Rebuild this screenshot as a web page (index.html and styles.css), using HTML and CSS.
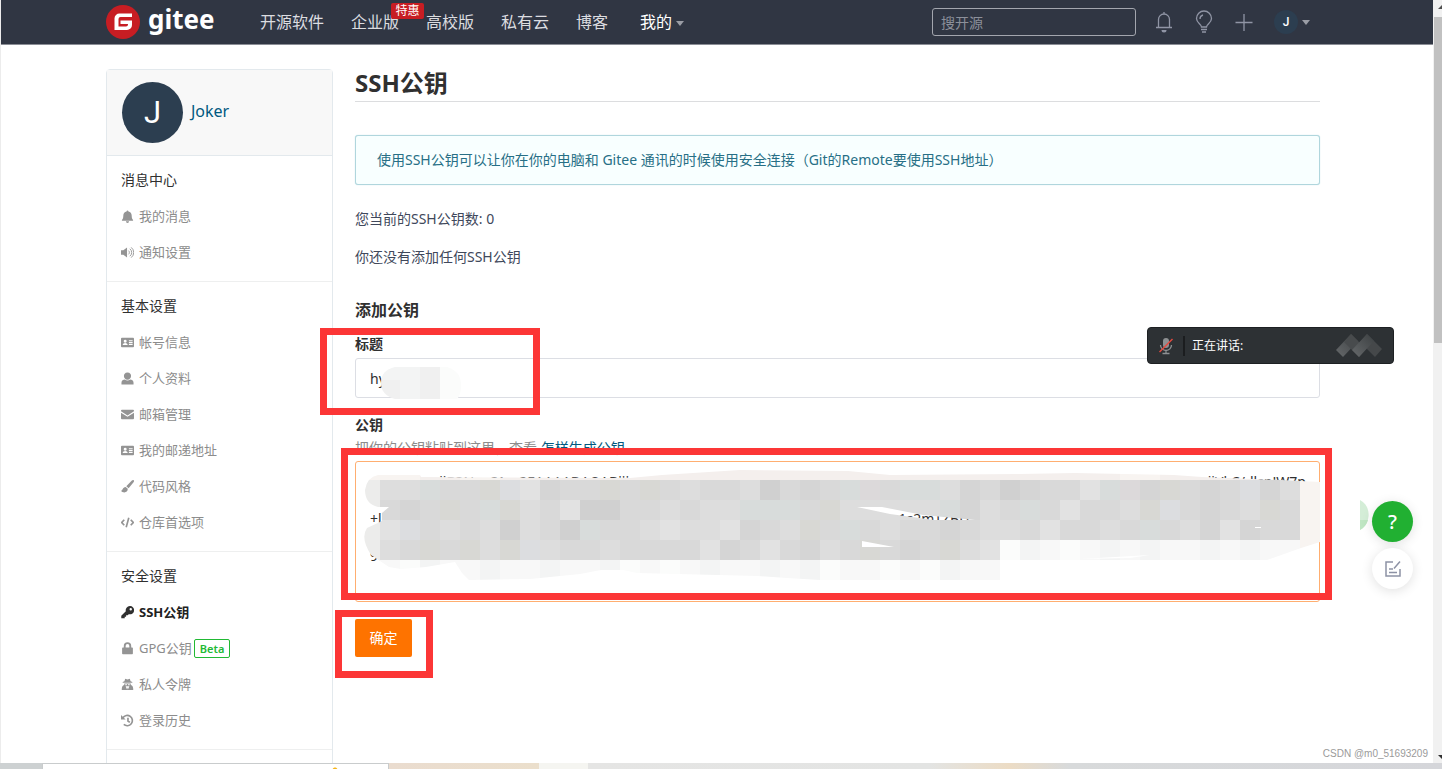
FILE: index.html
```html
<!DOCTYPE html>
<html lang="zh-CN">
<head>
    <meta charset="UTF-8">
    <meta name="viewport" content="width=device-width, initial-scale=1.0">
    <title>SSH公钥 - Gitee</title>
    <link rel="stylesheet" href="styles.css">
</head>
<body>
    <!-- shared icons -->
    <svg class="sprite" aria-hidden="true">
        <symbol id="i-card" viewBox="0 0 14 14"><path fill-rule="evenodd" d="M1 2h12a1 1 0 0 1 1 1v8a1 1 0 0 1-1 1H1a1 1 0 0 1-1-1V3a1 1 0 0 1 1-1zM4.500 4a1.600 1.600 0 1 1 0 3.200a1.600 1.600 0 0 1 0-3.200zM1.800 9.800c0-3 5.400-3 5.400 0zM8.500 4.500h4v1.200h-4zm0 2h4v1.200h-4zm0 2h4v1.200h-4z"/></symbol>
    </svg>

    <div class="window">
        <div class="page">
            <header class="topbar">
                <a href="#" class="logo">
                    <svg width="34" height="34" viewBox="0 0 34 34"><circle cx="17" cy="17" r="17" fill="#c71d23"/><path d="M26 8.500H13.500a5 5 0 0 0-5 5V25h12.500a5 5 0 0 0 5-5v-4.500H14.500v3.500h7.500v.5a2 2 0 0 1-2 2h-7.500v-7.500a2 2 0 0 1 2-2H26z" fill="#fff"/></svg>
                    <span>gitee</span>
                </a>
                <nav class="nav">
                    <a href="#">开源软件</a>
                    <a href="#" class="has-badge">企业版<span class="sale">特惠</span></a>
                    <a href="#">高校版</a>
                    <a href="#">私有云</a>
                    <a href="#">博客</a>
                    <a href="#" class="mine">我的<i class="caret"></i></a>
                </nav>
                <div class="tools">
                    <input type="search" class="search" placeholder="搜开源" aria-label="搜开源">
                    <button class="tool" aria-label="通知"><svg width="20" height="24" viewBox="0 0 20 24"><path d="M4.500 17V9.500a5.500 5.500 0 0 1 11 0V17M2 17.500h16M10 4V2" /><path d="M7.500 20a2.500 2.500 0 0 0 5 0z" class="solid"/></svg></button>
                    <button class="tool" aria-label="帮助"><svg width="20" height="24" viewBox="0 0 20 24"><path d="M7.500 17c0-3-5-4-5-8.500a7.500 7.500 0 0 1 15 0c0 4.500-5 5.500-5 8.500zM6 9a4 4 0 0 1 3-4M7 19.500h6M8 22h4"/></svg></button>
                    <button class="tool" aria-label="新建"><svg width="20" height="24" viewBox="0 0 20 24"><path d="M10 4v17M1.500 12.500h17"/></svg></button>
                    <button class="user"><span>J</span><i class="caret"></i></button>
                </div>
            </header>

            <div class="container">
                <aside class="sidebar">
                    <div class="profile">
                        <div class="avatar">J</div>
                        <a href="#">Joker</a>
                    </div>
                    <section class="menu">
                        <h2>消息中心</h2>
                        <a href="#"><svg viewBox="0 0 14 14"><path d="M7 0.500a1 1 0 0 1 1 1c2.500.5 3.500 2.500 3.500 4.500 0 3 .7 4 1.500 4.800V11.500H1v-.7C1.800 10 2.500 9 2.500 6c0-2 1-4 3.500-4.500a1 1 0 0 1 1-1zM5.300 12.200h3.400a1.700 1.700 0 0 1-3.400 0z"/></svg>我的消息</a>
                        <a href="#"><svg viewBox="0 0 14 14"><path d="M0 4.500h2.500L6.500 1.500v11L2.500 9.500H0z"/><path class="line" d="M8 5a2.500 2.500 0 0 1 0 4M9.500 3a5 5 0 0 1 0 8M11 1.500a7 7 0 0 1 0 11"/></svg>通知设置</a>
                    </section>
                    <section class="menu">
                        <h2>基本设置</h2>
                        <a href="#"><svg><use href="#i-card"/></svg>帐号信息</a>
                        <a href="#"><svg viewBox="0 0 14 14"><path d="M7 .5c5.500 0 4.800 7.800 0 7.800S1.500.5 7 .5zM.5 13.500v-2C.5 9 2.500 8.500 4 8.200c2 1.300 4 1.300 6 0C11.500 8.500 13.500 9 13.500 11.500v2z"/></svg>个人资料</a>
                        <a href="#"><svg viewBox="0 0 14 14"><path d="M1 2h12a1 1 0 0 1 1 1v.5L7 8 0 3.500V3a1 1 0 0 1 1-1zM0 5l7 4.500L14 5v6a1 1 0 0 1-1 1H1a1 1 0 0 1-1-1z"/></svg>邮箱管理</a>
                        <a href="#"><svg><use href="#i-card"/></svg>我的邮递地址</a>
                        <a href="#"><svg viewBox="0 0 14 14"><path d="M13.700.3c.6.6.3 1.300-.2 2L8.200 8.800 5.700 6.700 11.700.6c.7-.6 1.500-.8 2-.3zM5 7.500l2.300 2c0 5-5.800 4.500-7.300 2 2 .3 1.300-3.800 5-4z"/></svg>代码风格</a>
                        <a href="#"><svg viewBox="0 0 14 14"><path class="line thick" d="M3.500 4L.8 7l2.700 3M10.500 4l2.700 3-2.700 3M8.400 1.800L5.600 12.200"/></svg>仓库首选项</a>
                    </section>
                    <section class="menu">
                        <h2>安全设置</h2>
                        <a href="#" class="active"><svg viewBox="0 0 14 14"><path fill-rule="evenodd" d="M9.500 0a4.500 4.500 0 1 1-1.200 8.800L7.200 10H5.500v1.600H4V13.200H.3V10.400L5.200 5.600A4.500 4.500 0 0 1 9.500 0zm1 2.200a1.300 1.300 0 1 0 0 2.600a1.300 1.300 0 0 0 0-2.600z"/></svg>SSH公钥</a>
                        <a href="#"><svg viewBox="0 0 14 14"><path fill-rule="evenodd" d="M2 6h1V4.200a4 4 0 0 1 8 0V6h1a.8.8 0 0 1 .8.8v5.700a.8.8 0 0 1-.8.8H2a.8.8 0 0 1-.8-.8V6.800A.8.8 0 0 1 2 6zm3 0h4V4.200a2 2 0 0 0-4 0z"/></svg>GPG公钥<span class="beta">Beta</span></a>
                        <a href="#"><svg viewBox="0 0 14 14"><path fill-rule="evenodd" d="M4.500.8L7 1.500 9.500.8l.8 2.700 1.900.8v.8H1.800v-.8l1.900-.8zM3.500 6h7v1.500c2 .5 2.700 2 2.700 5.500H.8c0-3.500.7-5 2.700-5.500zm1 .7v1h2v-1zm3 0v1h2v-1zM5 9l1.500 3.500L7 10l.5 2.500L9 9z"/></svg>私人令牌</a>
                        <a href="#"><svg viewBox="0 0 14 14"><path d="M0 1v5h5z"/><path class="line thick" d="M2 4a5.600 5.600 0 1 1 1 7.300M7.500 4v3.500L9.500 9"/></svg>登录历史</a>
                    </section>
                    <section class="menu"></section>
                </aside>

                <main class="content">
                    <h1>SSH公钥</h1>
                    <div class="notice">使用SSH公钥可以让你在你的电脑和 Gitee 通讯的时候使用安全连接（Git的Remote要使用SSH地址）</div>
                    <p>您当前的SSH公钥数: 0</p>
                    <p>你还没有添加任何SSH公钥</p>

                    <form class="key-form">
                        <h3>添加公钥</h3>
                        <div class="field">
                            <label for="key-title">标题</label>
                            <input type="text" id="key-title" value="hy">
                            <svg class="smudge smudge-title" width="82" height="32" id="mosaic-title"></svg>
                            <div class="mark mark-title"></div>
                        </div>
                        <div class="field">
                            <label for="key-body">公钥</label>
                            <div class="hint">把你的公钥粘贴到这里，查看 <a href="#">怎样生成公钥</a></div>
                            <textarea id="key-body" spellcheck="false"></textarea>
                            <svg class="smudge smudge-body" width="960" height="120" id="mosaic-body"></svg>
                            <div class="mark mark-body"></div>
                        </div>
                        <div class="field actions">
                            <button type="button" class="submit">确定</button>
                            <div class="mark mark-submit"></div>
                        </div>
                    </form>
                </main>
            </div>

            <div class="speaking">
                <svg width="16" height="18" viewBox="0 0 16 18"><rect x="5" y="1" width="6" height="10" rx="3" fill="#8d9092"/><path d="M2.500 8a5.500 5.500 0 0 0 11 0M8 13.500V16M4.500 16.500h7" fill="none" stroke="#8d9092" stroke-width="1.300"/><path d="M1.500 15L14.500 2" stroke="#e5493f" stroke-width="1.500"/></svg>
                <span>正在讲话:</span>
                <svg class="wave" width="48" height="26" viewBox="0 0 48 26">
                    <defs><linearGradient id="fade" x1="0" y1="1" x2="1" y2="0"><stop offset="0" stop-color="#66696b"/><stop offset="1" stop-color="#3c4042"/></linearGradient></defs>
                    <path d="M16 1l7 7L8 24 1 17z" fill="url(#fade)"/>
                    <path d="M16 1l15 15-7 8L9 9z" fill="#484b4d"/>
                    <path d="M32 1l15 15-7 8L25 9z" fill="#45484a"/>
                    <path d="M32 1l7 7-15 16-7-7z" fill="url(#fade)"/>
                </svg>
            </div>

            <svg class="blob" width="9" height="30" viewBox="0 0 9 30"><path d="M0 0c12 6 11 24 0 30z" fill="#d4edd7"/><path d="M0 20h8c-1 4-4 8-8 10z" fill="#bfe6c3"/></svg>
            <div class="floaters">
                <button class="ask" aria-label="帮助中心">?</button>
                <button class="feedback" aria-label="反馈"><svg width="18" height="18" viewBox="0 0 18 18"><path d="M9 2H2v14h14V9M16 1.500l-6 7M5 9h4M5 12.500h8"/></svg></button>
            </div>
            <div class="watermark">CSDN @m0_51693209</div>
        </div>

        <div class="scroll"><i class="up"></i><div class="thumb"></div><i class="down"></i></div>
    </div>

    <div class="desktop"><div class="tab"></div><div class="wall"></div></div>

    <script src="mosaic.js"></script>
</body>
</html>
```

FILE: styles.css
```css
* {
    box-sizing: border-box;
}

body {
    margin: 0;
    height: 100vh;
    display: flex;
    flex-direction: column;
    overflow: hidden;
    background: #fff;
    color: #40485b;
    font-family: "Noto Sans", "Noto Sans CJK SC", sans-serif;
    font-size: 14px;
    line-height: 20px;
}

a {
    color: inherit;
    text-decoration: none;
}

button, input, textarea {
    font: inherit;
}

button {
    border: none;
    padding: 0;
    background: none;
}

.sprite {
    position: absolute;
    width: 0;
    height: 0;
}

.window {
    flex: 1;
    min-height: 0;
    display: flex;
}

.page {
    position: relative;
    flex: 1;
    overflow: hidden;
    border-left: 1px solid #ececec;
}

/* top bar */
.topbar {
    display: flex;
    align-items: center;
    height: 45px;
    padding: 0 123px 0 105px;
    background: #303643;
    border-bottom: 1px solid #8b8e96;
    color: #dcdde0;
    font-size: 16px;
}

.logo {
    display: flex;
    align-items: center;
    gap: 8px;
    width: 154px;
    height: 42px;
    color: #fff;
    font-family: "Noto Sans", sans-serif;
    font-size: 26px;
    font-weight: 700;
    line-height: 34px;
}

.logo span {
    padding-bottom: 6px;
}

.nav {
    display: flex;
    gap: 27px;
}

.has-badge {
    position: relative;
}

.sale {
    position: absolute;
    left: 40px;
    top: -9px;
    width: 33px;
    height: 16px;
    border-radius: 2px;
    background: #c71d23;
    color: #fff;
    font-size: 12px;
    line-height: 16px;
    text-align: center;
}

.mine {
    padding-left: 5px;
    color: #fff;
}

.caret {
    display: inline-block;
    margin-left: 4px;
    border: 4px solid transparent;
    border-top: 5px solid #9a9da5;
    border-bottom: 0;
    vertical-align: 2px;
}

.tools {
    display: flex;
    align-items: center;
    gap: 20px;
    margin-left: auto;
}

.search {
    width: 204px;
    height: 28px;
    margin-right: -2px;
    padding: 0 8px;
    border: 1px solid #a3a6ae;
    border-radius: 3px;
    background: transparent;
    color: #fff;
    font-size: 14px;
}

.search::placeholder {
    color: #8c909a;
}

.tool {
    display: flex;
}

.tool svg {
    fill: none;
    stroke: #9095a5;
    stroke-width: 1.3;
}

.tool .solid {
    fill: #9095a5;
    stroke: none;
}

.user {
    display: flex;
    align-items: center;
}

.user span {
    width: 24px;
    height: 24px;
    border-radius: 50%;
    background: #2c3e50;
    color: #fff;
    font-family: Roboto, sans-serif;
    font-size: 12px;
    font-weight: 500;
    line-height: 24px;
    text-align: center;
}

/* columns */
.container {
    display: flex;
    align-items: flex-start;
    gap: 22px;
    padding: 24px 113px 0 105px;
}

.sidebar {
    flex: 0 0 227px;
    border: 1px solid #e3e9ed;
    border-radius: 4px;
}

.profile {
    display: flex;
    align-items: center;
    gap: 8px;
    height: 86px;
    padding: 0 15px;
    background: #f8f8f8;
    border-bottom: 1px solid #e3e9ed;
    color: #005980;
    font-size: 16px;
}

.profile a {
    padding-bottom: 4px;
}

.avatar {
    width: 61px;
    height: 61px;
    border-radius: 50%;
    background: #2c3e50;
    color: #fff;
    font-family: Roboto, sans-serif;
    font-size: 31px;
    line-height: 61px;
    text-align: center;
}

.menu {
    min-height: 20px;
    padding: 5px 14px 11px;
    border-bottom: 1px solid #eeefef;
    color: #8c8c8c;
    font-size: 13px;
}

.menu h2 {
    margin: 0;
    color: #303030;
    font-size: 14px;
    font-weight: 400;
    line-height: 37px;
}

.menu a {
    display: flex;
    align-items: center;
    height: 36px;
}

.menu svg {
    width: 13px;
    height: 13px;
    margin-right: 5px;
    fill: #949494;
}

.menu .line {
    fill: none;
    stroke: #949494;
}

.menu .thick {
    stroke-width: 1.8;
}

.menu .active {
    color: #212121;
    font-weight: 700;
}

.menu .active svg {
    fill: #303030;
}

.beta {
    margin-left: 2px;
    padding: 0 5px;
    border: 1px solid #21b934;
    border-radius: 2px;
    color: #21b934;
    font-size: 11px;
    font-weight: 600;
    line-height: 17px;
}

/* main column */
.content {
    flex: 1;
    min-width: 0;
}

.content h1 {
    margin: 0 0 33px;
    padding-bottom: 5px;
    border-bottom: 1px solid #dcdddf;
    color: #303030;
    font-size: 24px;
    line-height: 27px;
}

.notice {
    margin-bottom: 24px;
    padding: 14px 21px;
    border: 1px solid #b0d6dd;
    border-radius: 3px;
    background: #f8ffff;
    box-shadow: 0 0 1px #a9d5de;
    color: #276f86;
}

.content p {
    margin: 0 0 18px;
}

.key-form h3 {
    margin: 33px 0 14px;
    color: #303030;
    font-size: 16px;
    line-height: 20px;
}

.field {
    position: relative;
    margin-bottom: 17px;
}

.field label {
    display: block;
    color: #303030;
    font-weight: 700;
}

.field input, .field textarea {
    display: block;
    width: 100%;
    border: 1px solid #dcdee4;
    border-radius: 3px;
    outline: none;
    color: #303030;
}

.field input {
    height: 40px;
    margin-top: 4px;
    padding: 0 14px;
}

.field textarea {
    height: 141px;
    padding: 1px 14px;
    border-color: #ffae70;
    line-height: 37px;
    white-space: pre;
    overflow: hidden;
}

.hint {
    margin-top: 3px;
    height: 23px;
    color: #8c8c8c;
}

.hint a {
    color: #005980;
}

.submit {
    display: block;
    width: 57px;
    height: 38px;
    border-radius: 2px;
    background: #fe7300;
    color: #fff;
}

/* blurred out parts and the frames drawn round them */
.smudge {
    position: absolute;
}

.smudge-title {
    left: 26px;
    top: 33px;
}

.smudge-body {
    left: 5px;
    top: 55px;
}

.mark {
    position: absolute;
    border: 7px solid #fc3636;
}

.mark-title {
    left: -35px;
    top: -6px;
    width: 220px;
    height: 87px;
}

.mark-body {
    left: -14px;
    right: -12px;
    top: 33px;
    height: 152px;
}

.mark-submit {
    left: -20px;
    top: -9px;
    width: 98px;
    height: 68px;
}

/* meeting bar */
.speaking {
    position: absolute;
    right: 39px;
    top: 327px;
    display: flex;
    align-items: center;
    width: 247px;
    height: 37px;
    padding: 0 10px;
    border: 1px solid #1d2022;
    border-radius: 4px;
    background: #2d3134;
    color: #fff;
    font-size: 12px;
}

.speaking span {
    margin-left: 9px;
    padding-left: 7px;
    border-left: 2px solid #1b1d1f;
}

.speaking .wave {
    margin-left: auto;
}

.blob {
    position: absolute;
    right: 64px;
    top: 500px;
}

.floaters {
    position: absolute;
    right: 20px;
    top: 501px;
    display: flex;
    flex-direction: column;
    gap: 6px;
}

.floaters button {
    display: flex;
    align-items: center;
    justify-content: center;
    width: 41px;
    height: 41px;
    border-radius: 50%;
    background: #fff;
    box-shadow: 0 2px 12px rgba(0, 0, 0, 0.12);
}

.floaters .ask {
    background: #21b032;
    color: #fff;
    font-size: 20px;
    font-weight: 500;
}

.floaters svg {
    fill: none;
    stroke: #8d92a5;
    stroke-width: 1.5;
}

.watermark {
    position: absolute;
    right: 5px;
    bottom: 3px;
    color: #9a9a9a;
    font-family: "Liberation Sans", Arial, sans-serif;
    font-size: 10px;
    line-height: 12px;
}

/* window scroll bar */
.scroll {
    display: flex;
    flex-direction: column;
    align-items: flex-end;
    width: 9px;
    background: #f1f1f1;
}

.scroll i {
    border: 4px solid transparent;
    border-right-width: 0;
}

.scroll .up {
    margin-bottom: 8px;
    border-top-width: 5px;
    border-bottom-color: #505050;
}

.scroll .down {
    margin-top: auto;
    border-top-color: #303030;
}

.thumb {
    width: 8px;
    height: 326px;
    background: #c1c1c1;
}

/* desktop showing under the window */
.desktop {
    display: flex;
    height: 6px;
    padding-left: 42px;
    background: #cdd1d2;
}

.tab {
    width: 347px;
    border: 1px solid #c9cccd;
    border-bottom: 0;
    background: radial-gradient(circle at 292px 6px, #f5b51c 2px, #fff 3px);
}

.wall {
    flex: 1;
    background: linear-gradient(90deg, #eadccf 0, #ebdfcc 150px, #f5f5f1 150px, #f5f5f1 199px, #e5e5e4 199px, #e3e4e3 540px, #ecdcc5 620px, #d8dadb 680px, #d5d6da 100%);
}
```

FILE: mosaic.js
```js
const NS = "http://www.w3.org/2000/svg";
const SHADES = {
    a: "#d0d0d0", b: "#d5d5d5", c: "#d9d9d9", d: "#dddddd", e: "#e2e2e2",
    g: "#d8dcdb", p: "#dcd9da", y: "#d8d8d4", l: "#dcdde0", k: "#ececeb",
    s: "#f8f4f1", t: "#f4efed", u: "#f3f4f4", w: "#f8f8f8", v: "#fbfcfb",
    f: "#f0f0f0"
};

// offset: where the first tile starts, relative to the svg
function drawMosaic(id, rows, offsetX, offsetY, outline) {
    const svg = document.getElementById(id);
    const clip = document.createElementNS(NS, "clipPath");
    const shape = document.createElementNS(NS, "path");
    const group = document.createElementNS(NS, "g");
    clip.id = id + "-clip";
    shape.setAttribute("d", outline);
    shape.setAttribute("clip-rule", "evenodd");
    clip.appendChild(shape);
    group.setAttribute("clip-path", "url(#" + clip.id + ")");
    group.setAttribute("shape-rendering", "crispEdges");
    rows.forEach((row, y) => {
        [...row].forEach((key, x) => {
            const tile = document.createElementNS(NS, "rect");
            tile.setAttribute("x", offsetX + x * 20);
            tile.setAttribute("y", offsetY + y * 20);
            tile.setAttribute("width", 20);
            tile.setAttribute("height", 20);
            tile.setAttribute("fill", SHADES[key]);
            group.appendChild(tile);
        });
    });
    svg.append(clip, group);
}

drawMosaic("mosaic-title", ["uufvv", "fufvv"], -1, -7,
    "M14 0H66Q80 4 80 18Q80 28 76 32H14Q0 28 0 16Q0 3 14 0Z");

drawMosaic("mosaic-body", [
    "sssttsstttttttttttttttttttttttttttttttssttttttss",
    "kddgccylebccycycdccdacbcgpcggdbcabccegpbycbclbds",
    "kcbcycgydceaaccdcddgggcydddddgbdcgceccdylcbcdycs",
    "kelcdcdadcagccdeddebcdycgcdccbcddceccdcgcdbebccs",
    "kdcycydyldccdccccebcecbdcycbcydevuwvwuwuwwuwuwws",
    "vwvuwwuwwuwwuvwvwuwwuwuvwwvwvuww"
], 0, -10,
    "M18 5L60 5L61 7L270 8L302 5L380 0L488 1L530 5L660 4L715 3L814 5L842 7L921 10L960 12V72L941 78L907 90" +
    "H640V110H460L427 108L398 106L277 103L263 100L241 100L220 104L170 109L109 110L102 103L95 92L66 97L41 99L29 97L11 85" +
    "Q0 68 7 58L22 51V43L29 37L18 37Q5 34 5 20Q7 7 18 5Z" +
    "M497 37L522 37L563 45L615 50L574 50L530 44Z" +
    "M502 71L534 77L502 77Z" +
    "M720 89L790 85L770 88Z M895 57h6v1h-6z");

// only the ends of the key stay readable
const gap = (count) => " ".repeat(count);
document.getElementById("key-body").value = [
    gap(19) + "jjB3NzaC1yc2EAAAADAQABjjj" + gap(159) + "iiVkC/dlspJW7p",
    "+l" + gap(142) + "1s2mTZBU",
    "97p"
].join("\n");
```
